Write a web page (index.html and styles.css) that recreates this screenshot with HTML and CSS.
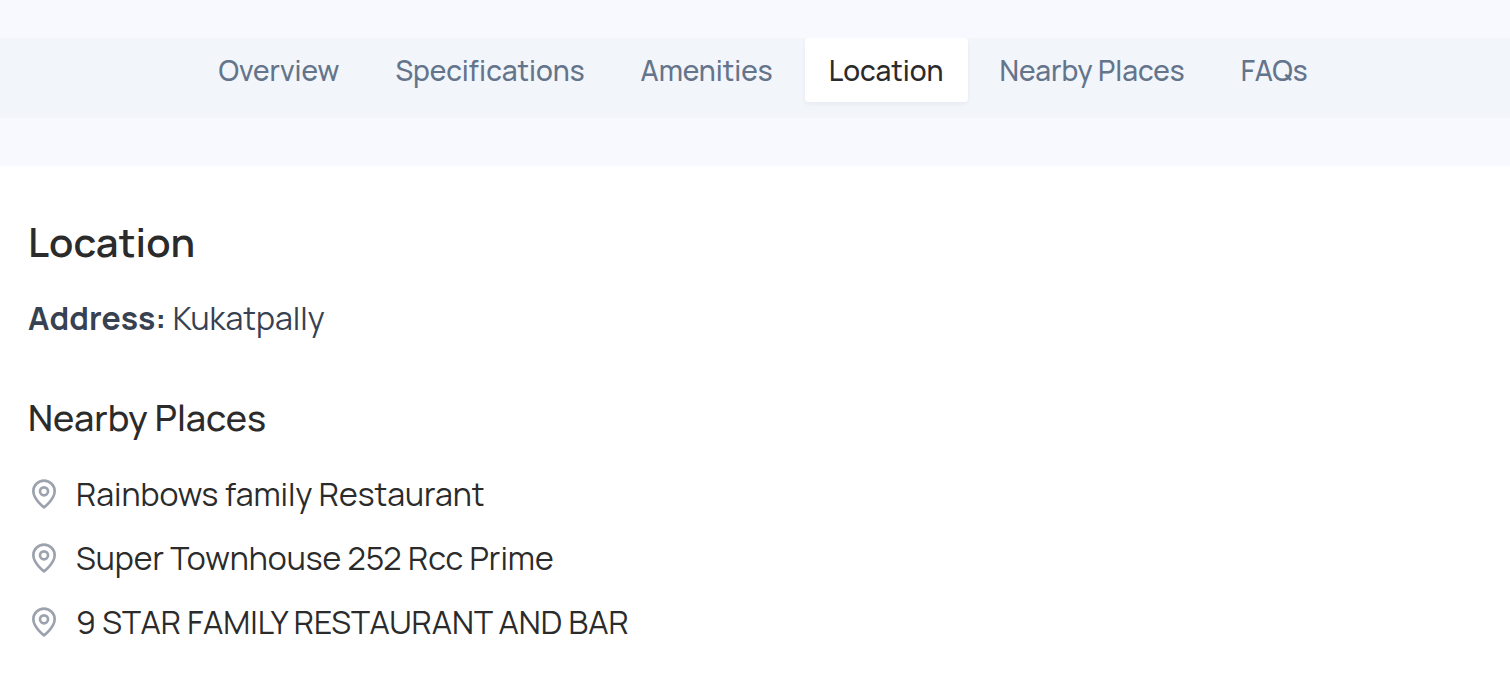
FILE: index.html
```html
<!DOCTYPE html>
<html lang="en">
<head>
<meta charset="utf-8">
<meta name="viewport" content="width=device-width, initial-scale=1">
<title>Location</title>
<link rel="stylesheet" href="styles.css">
</head>
<body>
<svg class="sprite" aria-hidden="true">
  <symbol id="pin" viewBox="0 0 24 24">
    <path d="M20 10c0 6-8 12-8 12s-8-6-8-12a8 8 0 0 1 16 0Z"/>
    <circle cx="12" cy="10" r="3"/>
  </symbol>
</svg>
<nav class="tabs" aria-label="Sections">
  <button class="tab" type="button">Overview</button>
  <button class="tab" type="button">Specifications</button>
  <button class="tab" type="button">Amenities</button>
  <button class="tab tab-active" type="button" aria-current="true">Location</button>
  <button class="tab" type="button">Nearby Places</button>
  <button class="tab" type="button">FAQs</button>
</nav>
<main class="panel">
  <h2 class="title">Location</h2>
  <p class="address"><strong>Address:</strong> Kukatpally</p>
  <h3 class="subtitle">Nearby Places</h3>
  <ul class="places">
    <li class="place"><svg class="pin" aria-hidden="true"><use href="#pin"/></svg><span>Rainbows family Restaurant</span></li>
    <li class="place"><svg class="pin" aria-hidden="true"><use href="#pin"/></svg><span>Super Townhouse 252 Rcc Prime</span></li>
    <li class="place"><svg class="pin" aria-hidden="true"><use href="#pin"/></svg><span>9 STAR FAMILY RESTAURANT AND BAR</span></li>
  </ul>
</main>
</body>
</html>
```

FILE: styles.css
```css
* { box-sizing: border-box; }
body {
  margin: 0;
  padding-top: 38px;
  min-height: 100vh;
  display: flex;
  flex-direction: column;
  background: #f8f9fe;
  color: #2b2b2b;
  font-family: Manrope, Inter, "Liberation Sans", sans-serif;
}
.sprite { display: none; }
.tabs {
  display: flex;
  justify-content: center;
  align-items: flex-start;
  gap: 8px;
  padding: 0 0 16px 16px;
  background: #f2f5fa;
}
.tab {
  padding: 12px 24px;
  border: 0;
  border-radius: 4px;
  background: none;
  color: #64748b;
  font: 500 28px/40px Manrope, Inter, "Liberation Sans", sans-serif;
  white-space: nowrap;
}
.tab-active {
  background: #fff;
  color: #2b2b2b;
  box-shadow: 0 2px 4px rgba(15, 23, 42, 0.05);
}
.panel {
  flex: 1;
  margin-top: 48px;
  padding: 48px 28px 28px;
  background: #fff;
}
.title { margin: 0; font-size: 40px; line-height: 56px; font-weight: 600; }
.address { margin: 24px 0 0; font-size: 32px; line-height: 48px; color: #374151; }
.address strong { font-weight: 700; }
.subtitle { margin: 52px 0 0; font-size: 36px; line-height: 48px; font-weight: 500; }
.places { margin: 28px 0 0; padding: 0; list-style: none; display: grid; gap: 16px; }
.place { display: flex; align-items: center; gap: 16px; font-size: 32px; line-height: 48px; }
.pin { width: 32px; height: 32px; flex: none; fill: none; stroke: #9ca3af; stroke-width: 2; stroke-linecap: round; stroke-linejoin: round; }
```
